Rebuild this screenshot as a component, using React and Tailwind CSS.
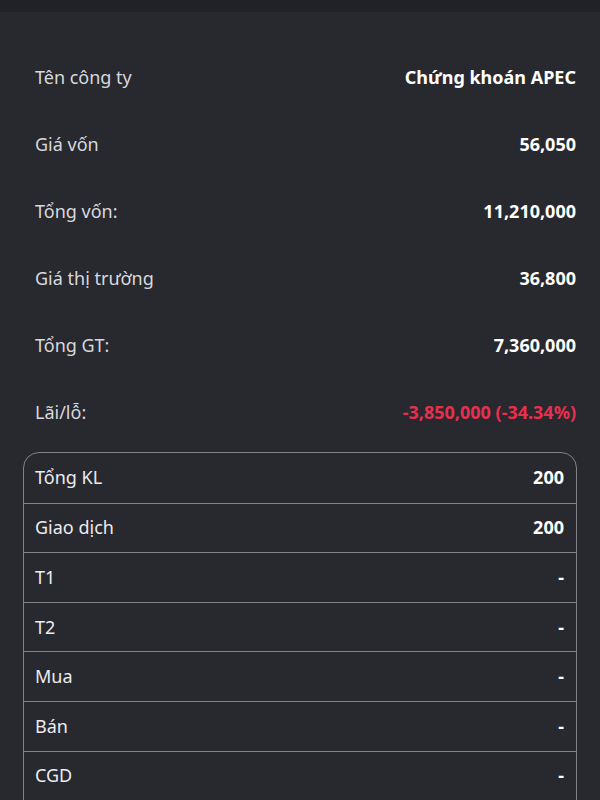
import React from "react";

const info = [
  { label: "Tên công ty", value: "Chứng khoán APEC" },
  { label: "Giá vốn", value: "56,050" },
  { label: "Tổng vốn:", value: "11,210,000" },
  { label: "Giá thị trường", value: "36,800" },
  { label: "Tổng GT:", value: "7,360,000" },
  { label: "Lãi/lỗ:", value: "-3,850,000 (-34.34%)", red: true },
];

const volumes = [
  { label: "Tổng KL", value: "200" },
  { label: "Giao dịch", value: "200" },
  { label: "T1", value: "-" },
  { label: "T2", value: "-" },
  { label: "Mua", value: "-" },
  { label: "Bán", value: "-" },
  { label: "CGD", value: "-" },
];

export default function App() {
  return (
    <div
      className="w-[600px] h-[800px] overflow-hidden bg-[#28282f] text-white"
      style={{ fontFamily: '"Noto Sans", sans-serif' }}
    >
      {/* top bar edge */}
      <div className="h-[12px] bg-[#212128]" />

      {/* SUMMARY */}
      <div className="pt-[32px] pl-[35px] pr-[24px]">
        {info.map((r) => (
          <div
            key={r.label}
            className="h-[67px] flex items-center justify-between text-[18px]"
          >
            <span className="text-[#d8d8dc]">{r.label}</span>
            <span
              className={
                r.red ? "font-bold text-[#e8304e]" : "font-bold text-white"
              }
            >
              {r.value}
            </span>
          </div>
        ))}
      </div>

      {/* VOLUME TABLE (continues below the fold) */}
      <div className="mt-[6px] mx-[23px] border border-[#828288] rounded-[16px] overflow-hidden">
        {volumes.map((r, i) => (
          <div
            key={r.label}
            className={
              "h-[49.6px] flex items-center justify-between pl-[11px] pr-[12px] text-[18px] " +
              (i > 0 ? "border-t border-[#828288]" : "")
            }
          >
            <span className="text-[#ececee]">{r.label}</span>
            <span className="font-bold text-white">{r.value}</span>
          </div>
        ))}
        <div className="h-[49.6px] border-t border-[#828288]" />
      </div>
    </div>
  );
}
